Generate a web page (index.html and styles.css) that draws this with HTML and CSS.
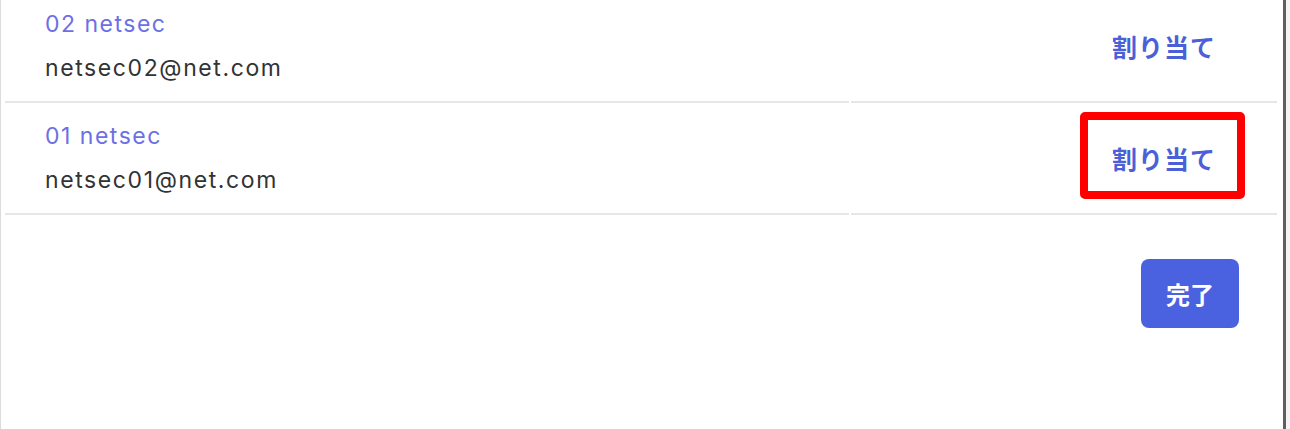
FILE: index.html
```html
<!DOCTYPE html>
<html lang="ja">
<head>
  <meta charset="UTF-8">
  <title>ユーザーの割り当て</title>
  <link rel="stylesheet" href="styles.css">
</head>
<body>
  <div class="screen">
    <div class="dialog">
      <table class="users">
        <tr>
          <td class="info">
            <div class="name">02 netsec</div>
            <div class="mail">netsec02@net.com</div>
          </td>
          <td class="action">
            <a href="javascript:;" class="assign">割り当て</a>
          </td>
        </tr>
        <tr>
          <td class="info">
            <div class="name">01 netsec</div>
            <div class="mail">netsec01@net.com</div>
          </td>
          <td class="action">
            <span class="mark">
              <a href="javascript:;" class="assign">割り当て</a>
            </span>
          </td>
        </tr>
      </table>
      <div class="footer">
        <button class="done">完了</button>
      </div>
    </div>
    <div class="edge"></div>
    <div class="backdrop"></div>
  </div>
</body>
</html>
```

FILE: styles.css
```css
* {
  margin: 0;
  padding: 0;
  box-sizing: border-box;
}

html,
body {
  height: 100%;
  overflow: hidden;
  background: #fff;
}

body {
  font-family: Inter, "Noto Sans CJK JP", sans-serif;
}

a,
button {
  cursor: pointer;
  text-decoration: none;
}

.screen {
  display: flex;
  height: 429px;
}

.dialog {
  width: 1283px;
  height: 100%;
  border-left: 1px solid #dcdcdc;
  padding: 0 4px 0 2px;
  background: #fff;
}

.edge {
  width: 3px;
  background: #5f5f5f;
}

.backdrop {
  flex: 1;
  background: #f4f4f4;
}

/* user list */
.users {
  width: 100%;
  margin-top: -9px;
  border-collapse: separate;
  border-spacing: 2px 0;
}

.users td {
  border-bottom: 2px solid #e6e6e6;
  vertical-align: middle;
}

.info {
  width: 844px;
  padding: 19px 0 19px 40px;
}

.name {
  font-size: 23px;
  line-height: 28px;
  letter-spacing: 1.5px;
  color: #6b70e6;
  margin-bottom: 16px;
}

.mail {
  font-size: 23px;
  line-height: 28px;
  letter-spacing: 1.6px;
  color: #333;
}

.action {
  text-align: right;
  padding-right: 37px;
}

.assign {
  display: inline-block;
  padding: 0 24px;
  font-size: 25px;
  line-height: 36px;
  letter-spacing: 1px;
  font-weight: 700;
  color: #4b5fd8;
  font-family: "Noto Sans CJK JP", sans-serif;
}

.mark {
  position: relative;
  display: inline-block;
}

.mark::after {
  content: "";
  position: absolute;
  left: -8px;
  right: -5px;
  top: -28px;
  bottom: -23px;
  border: 8px solid #ff0000;
  border-radius: 5px;
}

/* footer */
.footer {
  display: flex;
  justify-content: flex-end;
  padding: 44px 40px 0 0;
}

.done {
  width: 98px;
  height: 69px;
  border: 0;
  border-radius: 8px;
  background: #4b62e0;
  color: #fff;
  font-size: 24px;
  font-weight: 700;
  font-family: "Noto Sans CJK JP", sans-serif;
}
```
